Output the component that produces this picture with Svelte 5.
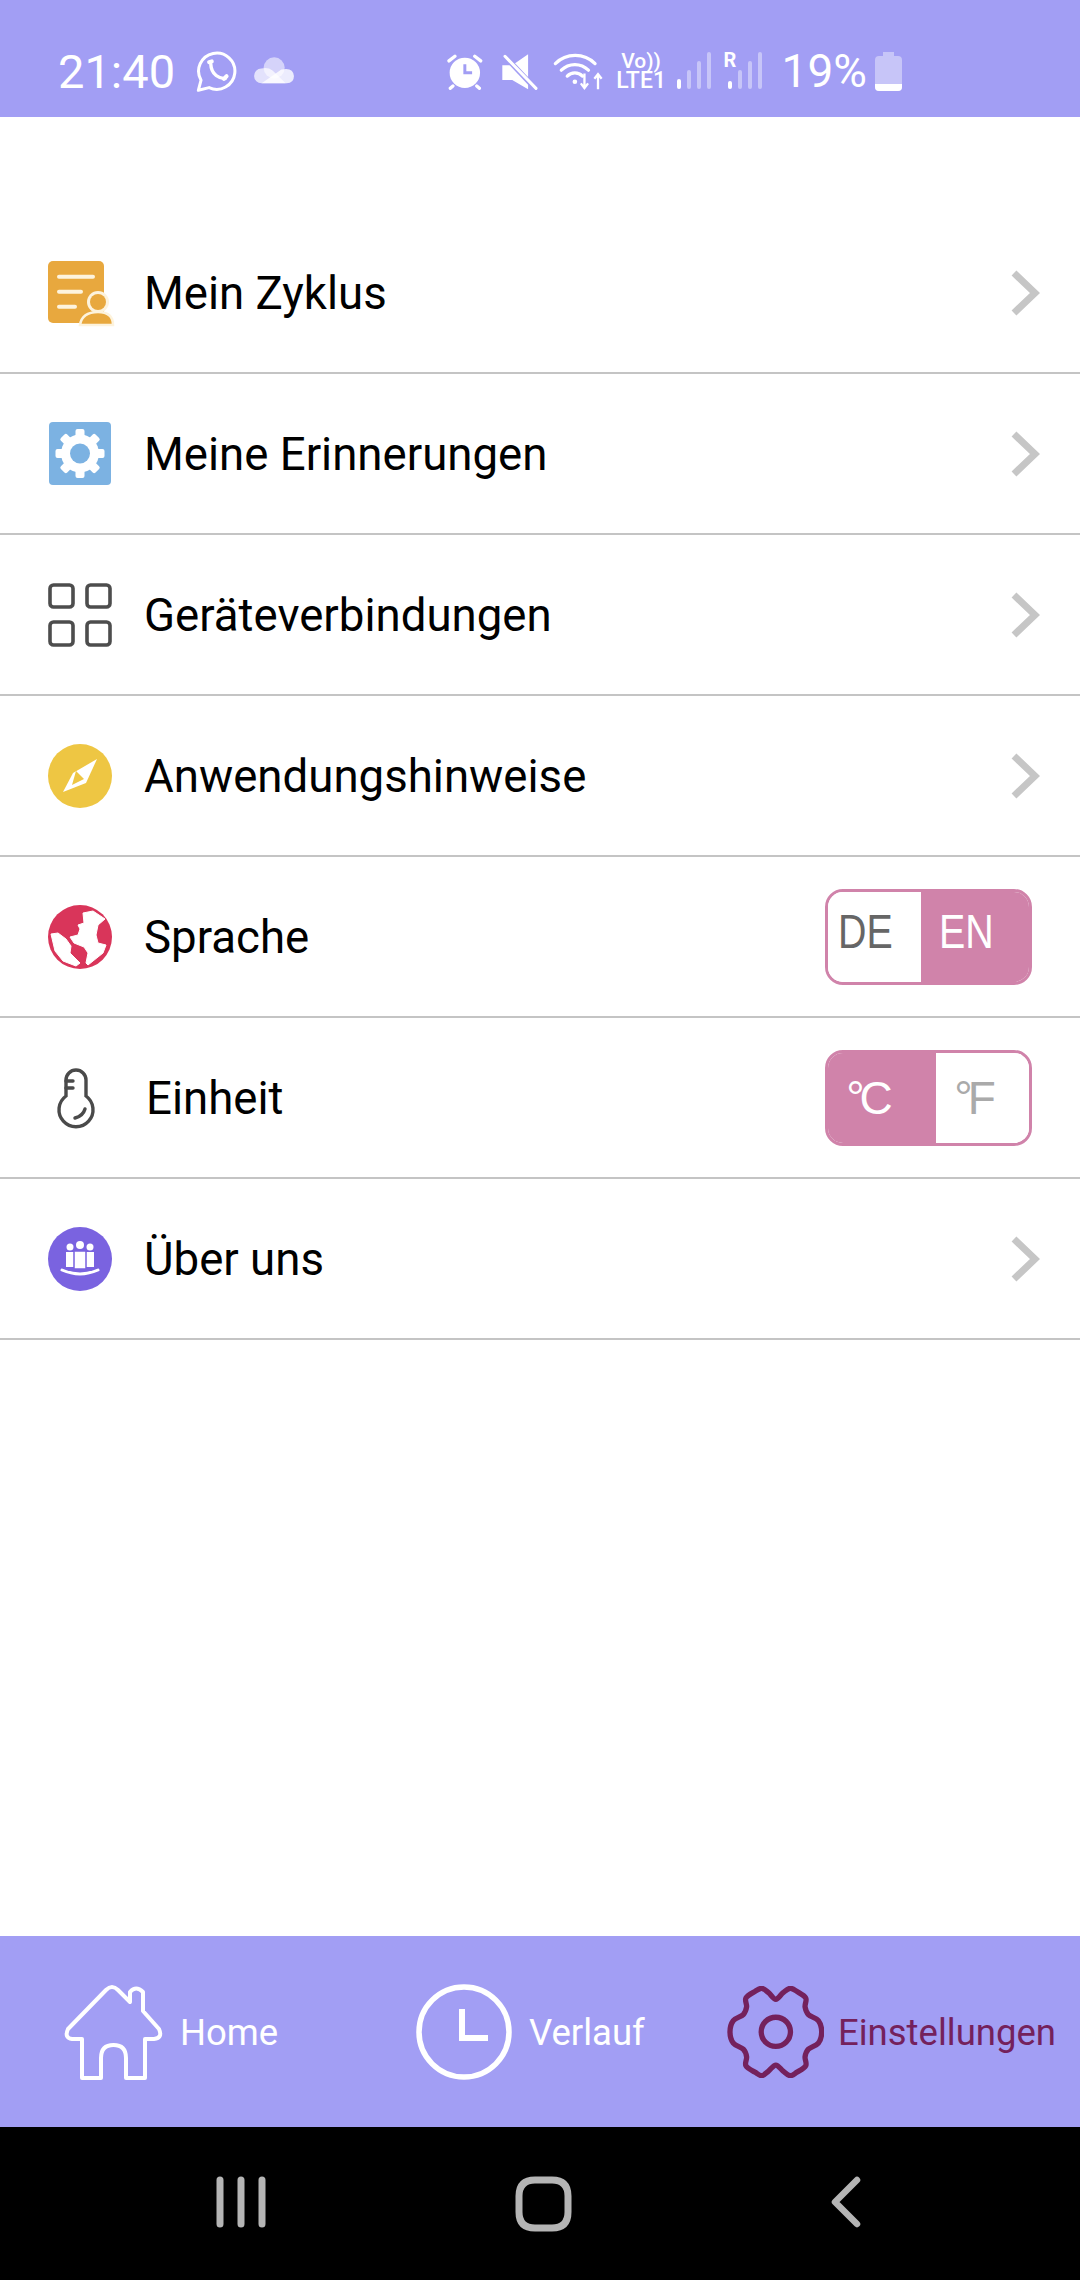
<script>
  // chevron rows and toggles share one list so the markup stays flat
  const rows = [
    { icon: 'doc', label: 'Mein Zyklus' },
    { icon: 'cog', label: 'Meine Erinnerungen' },
    { icon: 'grid', label: 'Geräteverbindungen' },
    { icon: 'compass', label: 'Anwendungshinweise' },
    { icon: 'globe', label: 'Sprache', toggle: { kind: 'lang', left: 'DE', right: 'EN', on: 'right', split: 93 } },
    { icon: 'thermo', label: 'Einheit', toggle: { kind: 'unit', left: '°C', right: '°F', on: 'left', split: 108 } },
    { icon: 'people', label: 'Über uns' }
  ];

  const teeth = [0, 45, 90, 135];

  const gearPoints = [
    [280, 208], [300, 199], [320, 212], [342, 232], [364, 212], [385, 199], [405, 208], [432, 228],
    [430, 255], [440, 278], [470, 296], [480, 330], [470, 364], [440, 382], [430, 405], [432, 432],
    [405, 452], [385, 462], [364, 448], [342, 430], [320, 448], [300, 462], [280, 452], [252, 432],
    [254, 405], [244, 382], [214, 364], [204, 330], [214, 296], [244, 278], [254, 255], [252, 228]
  ];

  // closed catmull-rom through the points, as cubic segments
  function spline(pts) {
    const n = pts.length;
    let d = `M${pts[0][0]} ${pts[0][1]}`;
    for (let i = 0; i < n; i++) {
      const p0 = pts[(i - 1 + n) % n];
      const p1 = pts[i];
      const p2 = pts[(i + 1) % n];
      const p3 = pts[(i + 2) % n];
      const c1x = p1[0] + (p2[0] - p0[0]) / 6;
      const c1y = p1[1] + (p2[1] - p0[1]) / 6;
      const c2x = p2[0] - (p3[0] - p1[0]) / 6;
      const c2y = p2[1] - (p3[1] - p1[1]) / 6;
      d += `C${c1x} ${c1y} ${c2x} ${c2y} ${p2[0]} ${p2[1]}`;
    }
    return d + 'Z';
  }

  const gearPath = spline(gearPoints);
</script>

<div class="screen">
  <header class="status">
    <span class="time">21:40</span>
    <svg class="whatsapp" viewBox="565 150 128 128" width="43" height="43" fill="none" stroke="#fff">
      <path d="M572 270 L580 240 A54 54 0 1 1 604 262 Z" stroke-width="9" stroke-linejoin="round" />
      <path d="M609 192 Q610 214 625 226 Q638 236 652 235" stroke-width="10" stroke-linecap="round" />
      <path d="M604 186 L612 184 M648 236 L656 228" stroke-width="12" stroke-linecap="round" />
    </svg>
    <svg class="cloud" viewBox="732 172 125 85" width="42" height="28">
      <circle cx="795" cy="205" r="32" fill="#fff" fill-opacity=".55" />
      <path d="M757 252a22 22 0 0 1-1-45q20-5 34 6l40 39z" fill="#fff" fill-opacity=".7" />
      <path d="M757 252l60-42q36-8 38 20q0 22-22 22z" fill="#fff" fill-opacity=".8" />
    </svg>

    <div class="status-right">
      <svg viewBox="85 68 110 112" width="37" height="37">
        <circle cx="138" cy="128" r="46" fill="#fff" />
        <path d="M90 92L108 78M168 78L186 92M102 168L94 175M174 168L182 175" stroke="#fff" stroke-width="10" stroke-linecap="round" />
        <path d="M138 102V128H160" fill="none" stroke="#a29ef4" stroke-width="9" />
      </svg>
      <svg class="mute" viewBox="245 68 110 112" width="37" height="37">
        <path d="M326 72V178L278 150H248V105H278Z" fill="#fff" />
        <path d="M250 72L350 178" stroke="#a29ef4" stroke-width="16" />
        <path d="M256 78L350 175" stroke="#fff" stroke-width="9" stroke-linecap="round" />
      </svg>
      <svg class="wifi" viewBox="400 65 155 115" width="52" height="38" fill="none" stroke="#fff">
        <path d="M406 100A85 85 0 0 1 526 100M424 120A58 58 0 0 1 506 120M442 138A32 32 0 0 1 488 138" stroke-width="10" stroke-linecap="round" />
        <circle cx="465" cy="155" r="7" fill="#fff" stroke="none" />
        <path d="M494 130V172M483 160L494 174L505 160M535 178V134M524 146L535 132L546 146" stroke-width="7" />
      </svg>
      <div class="volte"><span class="vo">Vo))</span><span>LTE1</span></div>
      <svg class="signal" viewBox="0 0 34 38" width="34" height="38">
        <rect x="0" y="27" width="4" height="10" rx="2" fill="#fff" />
        <rect x="10" y="18" width="4" height="19" rx="2" fill="#fff" fill-opacity=".4" />
        <rect x="20" y="9" width="4" height="28" rx="2" fill="#fff" fill-opacity=".4" />
        <rect x="30" y="0" width="4" height="37" rx="2" fill="#fff" fill-opacity=".4" />
      </svg>
      <div class="signal-r">
        <span class="roam">R</span>
        <svg viewBox="0 0 38 38" width="38" height="38">
          <rect x="4" y="29" width="4" height="8" rx="2" fill="#fff" />
          <rect x="14" y="18" width="4" height="19" rx="2" fill="#fff" fill-opacity=".4" />
          <rect x="24" y="9" width="4" height="28" rx="2" fill="#fff" fill-opacity=".4" />
          <rect x="34" y="0" width="4" height="37" rx="2" fill="#fff" fill-opacity=".4" />
        </svg>
      </div>
      <span class="percent">19%</span>
      <svg class="battery" viewBox="0 0 27 39" width="27" height="39">
        <path d="M8 0h11v4h4a4 4 0 0 1 4 4v27a4 4 0 0 1-4 4H4a4 4 0 0 1-4-4V8a4 4 0 0 1 4-4h4z" fill="#fff" fill-opacity=".4" />
        <path d="M0 32h27v3a4 4 0 0 1-4 4H4a4 4 0 0 1-4-4z" fill="#fff" />
      </svg>
    </div>
  </header>

  <main class="list">
    {#each rows as row}
      <div class="row">
        <svg class="icon" viewBox="0 0 64 64" width="64" height="64">
          {#if row.icon === 'doc'}
            <rect x="0" y="0" width="56" height="62" rx="5" fill="#e8a83e" />
            <path d="M11 15.7H45M11 30.7H33M11 45.7H27" stroke="#fdf3dd" stroke-width="4" stroke-linecap="round" />
            <circle cx="50" cy="41" r="11" fill="#fdf3dd" />
            <path d="M32 64Q34 51 50 51Q65 51 65 64Z" fill="#e8a83e" stroke="#fdf3dd" stroke-width="2.5" />
            <circle cx="50" cy="41" r="8" fill="#e8a83e" />
          {:else if row.icon === 'cog'}
            <rect x="1" y="0" width="62" height="63" rx="4" fill="#7cb2e2" />
            {#each teeth as a}
              <rect x="27.5" y="7" width="9" height="49" rx="2" fill="#fff" transform="rotate({a} 32 31.5)" />
            {/each}
            <circle cx="32" cy="31.5" r="19" fill="#fff" />
            <circle cx="32" cy="31.5" r="10" fill="#7cb2e2" />
          {:else if row.icon === 'grid'}
            <g fill="none" stroke="#4d4d4d" stroke-width="3.6">
              <rect x="2" y="2" width="23" height="22" rx="3.5" />
              <rect x="39" y="2" width="23" height="22" rx="3.5" />
              <rect x="2" y="39" width="23" height="23" rx="3.5" />
              <rect x="39" y="39" width="23" height="23" rx="3.5" />
            </g>
          {:else if row.icon === 'compass'}
            <circle cx="32" cy="32" r="32" fill="#eec643" />
            <path d="M49 15L25 29L15 48L38 39Z" fill="#fff" />
            <path d="M28 27L36 35L24 41Z" fill="#eec643" />
          {:else if row.icon === 'globe'}
            <circle cx="32" cy="32" r="32" fill="#d9355a" />
            <path d="M3 29L10 28L18 34L23 41L22 48L25 51L32 58L28 61L15 56L7 46Z" fill="#fff" stroke="#fff" stroke-linejoin="round" />
            <path d="M35 8L45 6L57 14L50 20L48 30L50 38L58 40L55 48L40 60L38 58L40 48L36 42L26 38L22 32L30 30L32 24L30 20L36 18Z" fill="#fff" stroke="#fff" stroke-linejoin="round" />
          {:else if row.icon === 'thermo'}
            <g fill="none" stroke="#4a4a4a" stroke-width="3.4" stroke-linecap="round">
              <path d="M18 30V14A10 10 0 0 1 38 14V30A17 17 0 1 1 18 30Z" />
              <path d="M18 15H25M18 22H25" />
              <path d="M27 52Q35 50 37 43" />
            </g>
          {:else}
            <circle cx="32" cy="32" r="32" fill="#7a63e0" />
            <circle cx="22" cy="20" r="3.5" fill="#fff" />
            <circle cx="42" cy="20" r="3.5" fill="#fff" />
            <path d="M18 25H26V40H18Z M38 25H46V40H38Z" fill="#fff" />
            <circle cx="32" cy="18" r="4" fill="#fff" />
            <path d="M26 24H38V42H26Z" fill="#fff" stroke="#7a63e0" stroke-width="1.5" />
            <path d="M14 43Q32 51 50 43" fill="none" stroke="#fff" stroke-width="3" stroke-linecap="round" />
          {/if}
        </svg>
        <span class="label" class:nudged={row.icon === 'thermo'}>{row.label}</span>
        {#if row.toggle}
          <div class="toggle {row.toggle.kind}">
            <span class="half" class:on={row.toggle.on === 'left'} class:off={row.toggle.on !== 'left'} style="width: {row.toggle.split}px"><span class="txt">{row.toggle.left}</span></span>
            <span class="half" class:on={row.toggle.on === 'right'} class:off={row.toggle.on !== 'right'} style="width: {201 - row.toggle.split}px"><span class="txt">{row.toggle.right}</span></span>
          </div>
        {:else}
          <svg class="chevron" viewBox="0 0 30 48" width="30" height="48">
            <path d="M4 4L25 24L4 44" fill="none" stroke="#c6c6c6" stroke-width="7" />
          </svg>
        {/if}
      </div>
    {/each}
  </main>

  <nav class="tabs">
    <div class="tab">
      <svg viewBox="0 0 101 98" width="101" height="98" fill="none" stroke="#fff" stroke-width="4" stroke-linejoin="round">
        <path d="M19 95V56H9Q1 55 5 46L43 7Q49 1 55 7L67 19V9Q73 2 80 9V28L96 46Q100 55 91 56H82V95H63V75Q63 62 50.5 62Q38 62 38 75V95Z" />
      </svg>
      <span class="tab-label">Home</span>
    </div>
    <div class="tab">
      <svg viewBox="0 0 96 96" width="96" height="96" fill="none" stroke="#fff">
        <circle cx="48" cy="48" r="45" stroke-width="5.5" />
        <path d="M46 25V54H72" stroke-width="6" />
      </svg>
      <span class="tab-label">Verlauf</span>
    </div>
    <div class="tab active">
      <svg viewBox="195 193 292 275" width="97" height="92" fill="none" stroke="#74215c" stroke-width="16">
        <path d={gearPath} />
        <circle cx="342" cy="330" r="44" />
      </svg>
      <span class="tab-label">Einstellungen</span>
    </div>
  </nav>

  <div class="navbar">
    <svg viewBox="0 0 50 52" width="50" height="52" stroke="#b5b5b5" stroke-width="7" stroke-linecap="round">
      <path d="M4 4V48M25 4V48M46 4V48" />
    </svg>
    <svg viewBox="0 0 57 56" width="57" height="56" fill="none" stroke="#b5b5b5" stroke-width="7">
      <path d="M20 4H37Q53 4 53 20V36Q53 52 37 52H20Q4 52 4 36V20Q4 4 20 4Z" />
    </svg>
    <svg viewBox="0 0 30 52" width="30" height="52" fill="none" stroke="#b5b5b5" stroke-width="6.5" stroke-linecap="round" stroke-linejoin="round">
      <path d="M26 4L4 26L26 48" />
    </svg>
  </div>
</div>

<style>
  :global(body) {
    margin: 0;
    background: #fff;
  }

  .screen {
    width: 1080px;
    height: 2280px;
    display: flex;
    flex-direction: column;
    font-family: Roboto, "Noto Sans", sans-serif;
  }

  .status {
    height: 117px;
    flex: none;
    display: flex;
    align-items: center;
    background: #a29ef4;
    color: #fff;
    padding: 25px 178px 0 58px;
    box-sizing: border-box;
  }

  .time {
    font-size: 47px;
    width: 138px;
    flex: none;
  }

  .cloud {
    margin-left: 14px;
  }

  .status-right {
    margin-left: auto;
    display: flex;
    align-items: center;
  }

  .mute {
    margin-left: 17px;
  }

  .wifi {
    margin-left: 15px;
  }

  .volte {
    margin-left: 13px;
    width: 47px;
    display: flex;
    flex-direction: column;
    align-items: center;
    font-size: 23px;
    line-height: 20px;
    font-weight: 500;
  }

  .vo {
    font-size: 21px;
  }

  .signal {
    margin-left: 12px;
  }

  .signal-r {
    margin-left: 13px;
    position: relative;
    height: 38px;
  }

  .roam {
    position: absolute;
    left: 0;
    top: -4px;
    font-size: 20px;
    line-height: 24px;
    font-weight: 700;
  }

  .percent {
    font-size: 46px;
    margin-left: 20px;
  }

  .battery {
    margin-left: 8px;
  }

  .list {
    flex: 1;
    padding-top: 96px;
  }

  .row {
    height: 161px;
    box-sizing: border-box;
    border-bottom: 2px solid #c4c4c4;
    display: flex;
    align-items: center;
    padding: 0 48px;
    gap: 32px;
  }

  .icon {
    flex: none;
    overflow: visible;
  }

  .label {
    flex: 1;
    font-size: 45.6px;
    color: #000;
    padding-top: 2px;
  }

  .label.nudged {
    padding-left: 2px;
  }

  .chevron {
    margin-right: -8px;
  }

  .toggle {
    width: 207px;
    height: 96px;
    display: flex;
    box-sizing: border-box;
    border: 3px solid #d083aa;
    border-radius: 18px;
    overflow: hidden;
    font-family: "Liberation Sans", Arial, sans-serif;
  }

  .half {
    display: flex;
    align-items: center;
    justify-content: center;
    box-sizing: border-box;
    flex: none;
  }

  .half.on {
    background: #d083aa;
    color: #fff;
  }

  .half.off {
    background: #fff;
    color: #aaa;
  }

  .lang .half.off {
    color: #666;
  }

  .txt {
    display: block;
  }

  .lang .txt {
    font-size: 48px;
    transform: translate(-9px, -5px) scaleX(0.82);
  }

  .unit .txt {
    font-size: 46px;
    letter-spacing: -5px;
    transform: translate(-10px, 0);
  }

  .unit .half.on .txt {
    transform: translate(-15px, 0);
  }

  .tabs {
    height: 191px;
    flex: none;
    background: #a29ef4;
    display: grid;
    grid-template-columns: 353px 311px 1fr;
    align-items: center;
    padding-left: 63px;
    box-sizing: border-box;
  }

  .tab {
    display: flex;
    align-items: center;
    gap: 16px;
    color: #fff;
  }

  .tab:nth-child(2) {
    gap: 17px;
  }

  .tab.active {
    color: #74215c;
    gap: 14px;
  }

  .tab-label {
    font-size: 36.5px;
    white-space: nowrap;
    padding-top: 2px;
  }

  .navbar {
    height: 153px;
    flex: none;
    background: #000;
    display: grid;
    grid-template-columns: 299px 316px 30px;
    justify-content: start;
    padding: 49px 0 0 216px;
    box-sizing: border-box;
    align-items: start;
  }
</style>
